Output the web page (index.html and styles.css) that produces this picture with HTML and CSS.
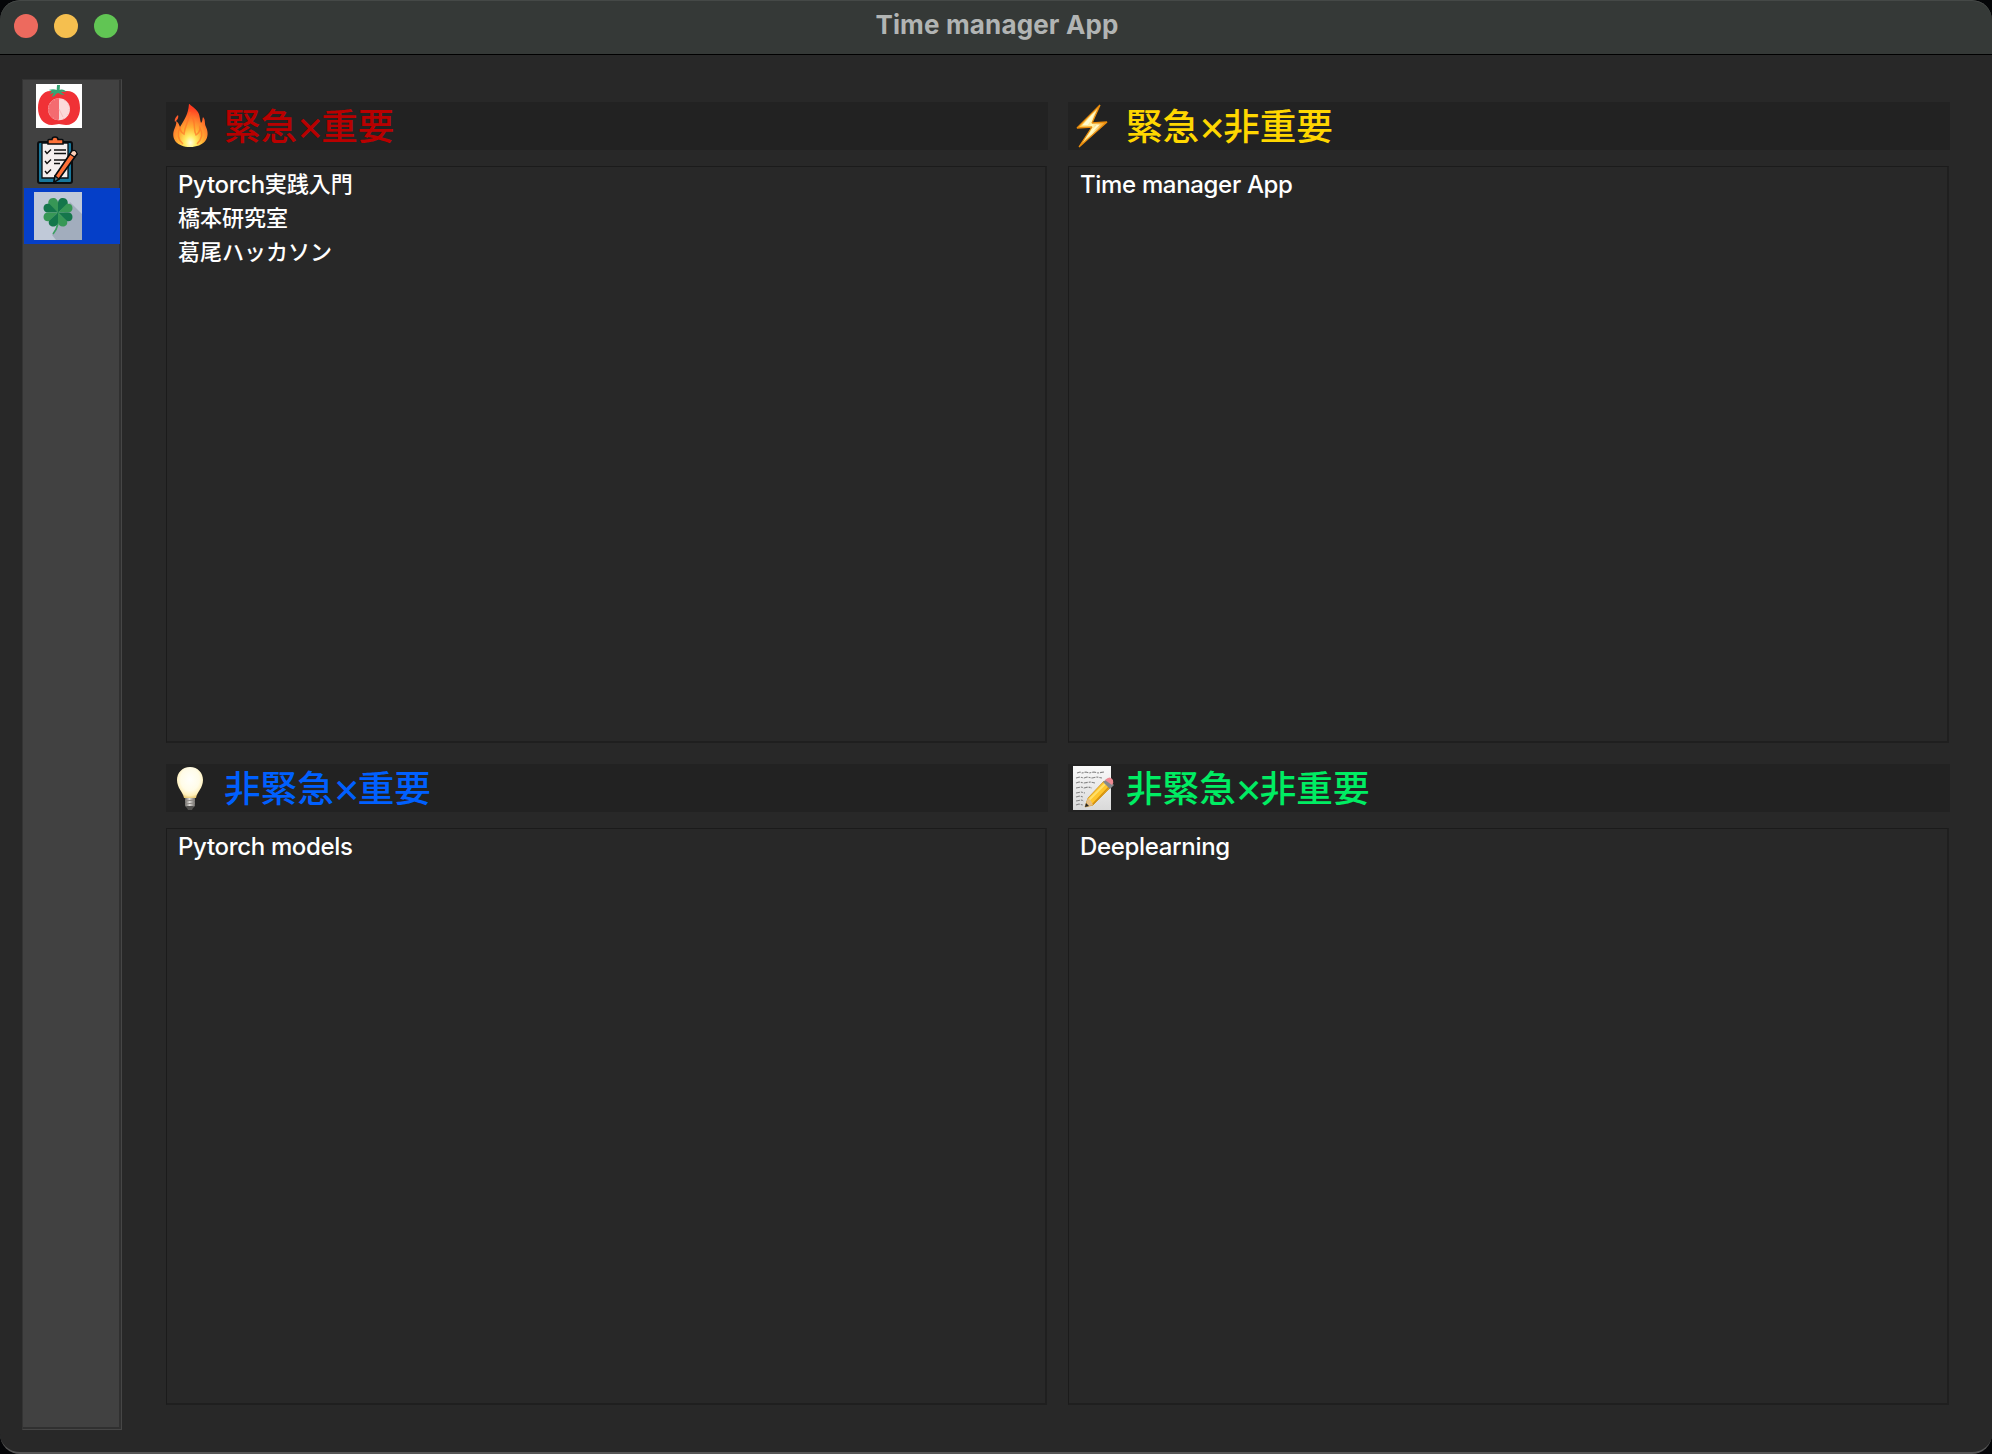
FILE: index.html
```html
<!DOCTYPE html>
<html lang="ja">
<head>
<meta charset="utf-8">
<title>Time manager App</title>
<link rel="stylesheet" href="styles.css">
</head>
<body>
<div class="window">
  <header class="titlebar">
    <div class="lights"><i class="light close"></i><i class="light minimize"></i><i class="light zoom"></i></div>
    <h1 class="title">Time manager App</h1>
  </header>
  <div class="content">
    <nav class="sidebar">
      <div class="tab tomato">
        <svg width="46" height="44" viewBox="0 0 46 44">
          <rect width="46" height="44" fill="#fff"/>
          <path d="M16 7C7 6 2 14 2 24c0 9 5 17 14 17 3 0 5-1 7-1s4 1 7 1c9 0 14-8 14-17C44 13 39 6 29 7c-4 1-8 1-13 0z" fill="#f03136"/>
          <path d="M21 1h3l-.3 5c3-1 5 0 7 2-3-.5-4 0-6 0l4 3c-3 0-5-1-6-2-2 0-3 1-4 3l-3 1 2-4-4 1 2-3-3-1c3-1 6-1 8 0z" fill="#35a574"/>
          <circle cx="23" cy="25.3" r="11" fill="#fbd9da"/>
          <path d="M23 14.300a11 11 0 0 0 0 22z" fill="#f46b70"/>
          <path d="m23 25 4 8" stroke="#f5b1b3" stroke-width=".7"/>
          <circle cx="23" cy="25.3" r="10.300" fill="none" stroke="#f8a5a8" stroke-dasharray=".8 4.600"/>
        </svg>
      </div>
      <div class="tab clipboard">
        <svg width="42" height="48" viewBox="0 0 42 48">
          <rect x="1" y="6" width="34" height="41" rx="2" fill="#19779b" stroke="#090d10" stroke-width="2"/>
          <path d="M5 7h26v35H5z" fill="#f5efef" stroke="#090d10" stroke-width="1.300"/>
          <path d="M11 8V4.500q0-1 1-1h3C15 0 21 0 21 3.500h4q1 0 1 1V8z" fill="#ff7138" stroke="#090d10" stroke-width="1.500"/>
          <path d="m8 15 2 2.500 4-4M8 25l2 2.500 4-4M8 35l2 2.500 4-4M17 14h12M17 17.500h12M17 24h12M17 27.500h6" fill="none" stroke="#111" stroke-width="1.400"/>
          <path d="m35 15 5 3-18 25-5 3 1-6z" fill="#ff7138" stroke="#090d10" stroke-width="1.700" stroke-linejoin="round"/>
          <path d="m35 15q4-2 5 3l-2.500 3-4.500-3z" fill="#ffd0b8" stroke="#090d10" stroke-width="1.200"/>
          <path d="m18 40 4 3-5 3z" fill="#4d7c8b" stroke="#090d10" stroke-width="1.300"/>
        </svg>
      </div>
      <div class="tab clover selected">
        <svg width="48" height="48" viewBox="0 0 48 48">
          <rect width="48" height="48" fill="#c0c9d8"/>
          <path d="m36 10 12 12v26H22l-4-5 6-11z" fill="#a2adbd"/>
          <path d="M24 20q2 14-5 22" fill="none" stroke="#3c9f61" stroke-width="1.600"/>
          <path d="M24 20.500 14.500 13c-1-4 1-7 4.500-7 3 0 5 2 5 5z" fill="#379756"/>
          <path d="M24 20.500V11c0-3 2-5 5-5 3.500 0 5.500 3 4.500 7z" fill="#14764b"/>
          <path d="M24 20.500H14c-3 0-4.500-2-4.500-4.500 0-3.500 3-5 6-4z" fill="#14764b"/>
          <path d="M24 20.500h10c3 0 4.500-2 4.500-4.500 0-3.500-3-5-6-4z" fill="#379756"/>
          <path d="M24 20.500H14c-3 0-4.500 2-4.500 4.500 0 3.500 3 5 6 4z" fill="#379756"/>
          <path d="M24 20.500h10c3 0 4.500 2 4.500 4.500 0 3.500-3 5-6 4z" fill="#14764b"/>
          <path d="M24 20.500 15 29c-1 3 1 5.500 4 5.500s5-2 5-4.500z" fill="#14764b"/>
          <path d="M24 20.500V30c0 2.500 2 4.500 5 4.500s5-2.500 4-5.500z" fill="#379756"/>
        </svg>
      </div>
    </nav>
    <main class="matrix">
      <section class="quadrant">
        <h2 class="heading red">
          <svg class="emoji" width="48" height="48" viewBox="0 0 48 48">
            <defs><radialGradient id="fire" cx=".5" cy=".9" r=".8"><stop offset="0" stop-color="#fffde0"/><stop offset=".2" stop-color="#ffed65"/><stop offset=".45" stop-color="#ffae32"/><stop offset=".72" stop-color="#ff782c"/><stop offset="1" stop-color="#ff3c20"/></radialGradient></defs>
            <path d="M23 2c1 0 2 2 4 3 8 6 6 10 8 16 2-2 1-4 2-6 3 3 1 6 3 10 5 11-2 20-16 20C11 45 5 37 8 28c1-3 3-6 2-9 3 2 3 4 4 6 5-9 8-12 9-23z" fill="url(#fire)"/>
            <path d="M12 13c1 3-1 5-3 7-1-3 1-5 3-7z" fill="#ff5b2c"/>
            <path d="M24 10c-1 9-5 13-6 22-2-1-4-4-4-7-3 7-2 13 3 17m9-27c4 6 1 12 4 18 3-2 4-4 4-7 4 7 1 12-3 16" fill="none" stroke="#ff7127" stroke-width="1.500" opacity=".65"/>
          </svg><span>緊急<b>×</b>重要</span>
        </h2>
        <ul class="list"><li>Pytorch<span class="ja">実践入門</span></li><li><span class="ja">橋本研究室</span></li><li><span class="ja">葛尾ハッカソン</span></li></ul>
      </section>
      <section class="quadrant">
        <h2 class="heading yellow">
          <svg class="emoji" width="48" height="48" viewBox="0 0 48 48">
            <defs><linearGradient id="bolt" x1="0" x2="1"><stop stop-color="#ffbd2d"/><stop offset=".5" stop-color="#fff8b5"/><stop offset="1" stop-color="#f18b00"/></linearGradient></defs>
            <path d="M32 3 9 26l15-1-13 20 28-25-15 1z" fill="url(#bolt)" stroke="#e98b0b" stroke-width="1.300" stroke-linejoin="bevel"/>
            <path d="M28 9 14 23.500l15-1L16 38l16-15.500-12 .5z" fill="#fffbd0"/>
          </svg><span>緊急<b>×</b>非重要</span>
        </h2>
        <ul class="list"><li>Time manager App</li></ul>
      </section>
      <section class="quadrant">
        <h2 class="heading blue">
          <svg class="emoji" width="48" height="48" viewBox="0 0 48 48">
            <defs><radialGradient id="glass" cx=".5" cy=".4" r=".65"><stop stop-color="#fffffb"/><stop offset=".55" stop-color="#fffce8"/><stop offset=".8" stop-color="#fff0bb"/><stop offset="1" stop-color="#dfb856"/></radialGradient><linearGradient id="metal"><stop stop-color="#686764"/><stop offset=".45" stop-color="#e1deda"/><stop offset="1" stop-color="#6b6966"/></linearGradient></defs>
            <path d="M19 33h10v9q-5 5-10 0z" fill="url(#metal)"/><path d="M20 42h8l-2 4h-4z" fill="#51504e"/><path d="m19 37 10-1m-10 4 10-1" stroke="#8b8782"/>
            <path d="M24 3C16 3 11 9 11 16c0 8 6 12 7 18h12c1-6 7-10 7-18C37 9 32 3 24 3z" fill="url(#glass)"/>
          </svg><span>非緊急<b>×</b>重要</span>
        </h2>
        <ul class="list"><li>Pytorch models</li></ul>
      </section>
      <section class="quadrant">
        <h2 class="heading green">
          <svg class="emoji" width="48" height="48" viewBox="0 0 48 48">
            <defs><linearGradient id="paper" x2="0" y2="1"><stop stop-color="#fafafa"/><stop offset="1" stop-color="#d9d9d9"/></linearGradient></defs>
            <path d="M5 2h38v44H5z" fill="url(#paper)"/>
            <path d="m9 9 3-1 2 1 4-1 3 1 5-1 4 1 6-1M8 14l4-1 4 1 3-1 5 1 5-1 5 1M8 19l3-1 5 1 6-1 5 1M8 24l5-1 3 1 4-1 4 1M8 29l5-1 4 1M8 33l4-1 3 1M8 37l5-1 3 1M8 41l3-1 4 1" fill="none" stroke="#858585" stroke-width="1.100" stroke-dasharray="4 1 2 1"/>
            <path d="m36 17 7 6-18 18-8 2 3-9z" fill="#ffc62d" stroke="#c48817" stroke-width=".7"/>
            <path d="m38 19-18 18" stroke="#ffe06b" stroke-width="2"/><path d="m42 22-18 19" stroke="#d6920f" stroke-width="1.500"/>
            <path d="m20 34-3 9 8-2q-1-4-5-7z" fill="#e7be80"/><path d="m18 39-1 4 4-1z" fill="#252525"/>
            <path d="m35 18 4-3 7 6-4 4z" fill="#86898d"/><path d="M37 16q5-5 8 0 1 3-1 5z" fill="#ef8a93"/>
          </svg><span>非緊急<b>×</b>非重要</span>
        </h2>
        <ul class="list"><li>Deeplearning</li></ul>
      </section>
    </main>
  </div>
</div>
</body>
</html>
```
FILE: styles.css
```css
* { box-sizing: border-box; }
body { margin: 0; background: #050608; font-family: Inter, "Noto Sans CJK JP", sans-serif; }
.window { display: flex; flex-direction: column; width: 1992px; height: 1454px; overflow: hidden; background: #282828; border-radius: 20px; border-bottom: 2px solid #555; }
.titlebar { display: grid; grid-template-columns: 1fr auto 1fr; height: 55px; flex: none; background: #353937; border-bottom: 1px solid #000; border-radius: 20px 20px 0 0; box-shadow: inset 0 1px #454947; }
.lights { display: flex; gap: 16px; padding: 14px; }
.light { width: 24px; height: 24px; border-radius: 50%; }
.close { background: #ed6a5e; }
.minimize { background: #f5bf4f; }
.zoom { background: #61c554; }
.title { margin: 0; padding-left: 2px; color: #b1b4b3; font-size: 26px; line-height: 50px; font-weight: 700; letter-spacing: .15px; white-space: nowrap; }
.content { display: flex; gap: 44px; flex: 1; padding: 23px 42px 22px 22px; }
.sidebar { width: 100px; height: 1351px; margin-top: 1px; padding: 4px 0 0 1px; background: #414141; border: 1px solid #343434; border-right-color: #464646; border-bottom-color: #464646; box-shadow: inset -2px -2px #303030; }
.tab { height: 52px; padding-left: 12px; }
.clipboard { padding-left: 13px; }
.clover { height: 56px; width: 96px; padding: 4px 0 0 10px; background: #053fc8; }
.tab svg, .emoji { display: block; flex: none; }
.matrix { display: grid; grid-template-columns: 882px 882px; grid-template-rows: 641px 641px; gap: 21px 20px; padding-top: 24px; }
.quadrant { display: flex; flex-direction: column; gap: 16px; }
.heading { display: flex; height: 48px; margin: 0; background: #222; font-size: 36.600px; line-height: 50px; font-weight: 500; white-space: nowrap; }
.heading span { margin-left: 10px; }
.heading b { display: inline-block; width: 24px; margin-right: 0; font-size: 42px; line-height: 0; font-weight: 400; text-indent: -1px; }
.red { color: #b90000; }
.yellow { color: #ffd700; }
.blue { color: #0060ff; }
.green { color: #00ed63; }
.list { flex: 1; width: 881px; margin: 0; padding: 1px 0 0 11px; list-style: none; border: 1px solid #1b1b1b; border-right: 2px solid #1f1f1f; border-bottom: 2px solid #1f1f1f; color: #fff; font-size: 24px; font-weight: 500; letter-spacing: -.33px; }
.list li { height: 34px; line-height: 34px; white-space: nowrap; }
.ja { display: inline-block; font-size: 22px; line-height: 32px; font-weight: 500; letter-spacing: 0; vertical-align: top; }
```
